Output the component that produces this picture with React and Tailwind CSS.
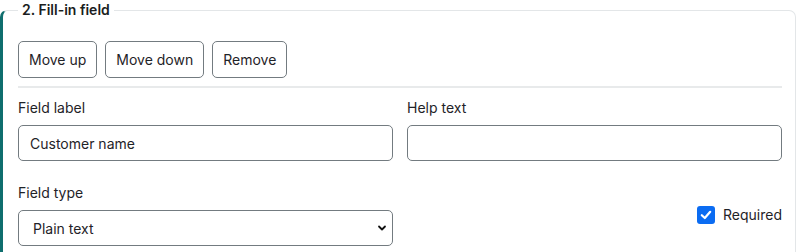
import React from "react";

export default function App() {
  return (
    <div className="w-[800px] h-[252px] bg-white overflow-hidden" style={{ fontFamily: "Inter, 'Noto Sans', sans-serif" }}>
      <fieldset className="mr-[4px] border border-[#e3e6e8] border-l-[3px] border-l-[#0f6e6e] rounded-[7px] pl-[15px] pr-[13px] pt-[21px] pb-4 min-w-0">
        <legend className="px-1 text-[14px] leading-[20px] font-semibold text-[#1a1d20]">2. Fill-in field</legend>
        <div className="flex gap-[8px]">
          {["Move up", "Move down", "Remove"].map((t) => (
            <button key={t} className="h-[37px] px-[10px] border border-[#737b80] rounded-[5px] text-[14px] text-[#1f2328] bg-white">
              {t}
            </button>
          ))}
        </div>
        <div className="mt-[8px] h-[2px] bg-[#e8eaeb]" />
        <div className="grid grid-cols-2 gap-x-[14px] mt-[10px]">
          <div>
            <label className="block text-[14px] leading-[20px] text-[#1f2328] mb-[7px]">Field label</label>
            <div className="h-[36px] border border-[#737b80] rounded-[5px] flex items-center px-[11px] text-[14px] text-[#1f2328]">Customer name</div>
          </div>
          <div>
            <label className="block text-[14px] leading-[20px] text-[#1f2328] mb-[7px]">Help text</label>
            <div className="h-[36px] border border-[#737b80] rounded-[5px]" />
          </div>
          <div className="mt-[22px]">
            <label className="block text-[14px] leading-[20px] text-[#1f2328] mb-[7px]">Field type</label>
            <div className="h-[36px] border border-[#737b80] rounded-[5px] flex items-center justify-between pl-[14px] pr-[4px] text-[14px] text-[#1f2328]">
              <span>Plain text</span>
              <svg width="10" height="10" viewBox="0 0 10 10" className="mr-[1px]">
                <path d="M2 3.5 L5 6.5 L8 3.5" fill="none" stroke="#111" strokeWidth="1.8" strokeLinecap="round" strokeLinejoin="round" />
              </svg>
            </div>
          </div>
          <div className="mt-[22px] pt-[23px] flex justify-end items-start">
            <div className="flex items-center gap-[8px]">
              <span className="w-[18px] h-[18px] rounded-[3px] bg-[#0b6cf2] flex items-center justify-center">
                <svg width="14" height="14" viewBox="0 0 14 14">
                  <path d="M2.8 7.2 L5.8 10 L11.2 3.8" fill="none" stroke="white" strokeWidth="2.2" strokeLinecap="round" strokeLinejoin="round" />
                </svg>
              </span>
              <span className="text-[14px] leading-[18px] text-[#1f2328]">Required</span>
            </div>
          </div>
        </div>
      </fieldset>
    </div>
  );
}
